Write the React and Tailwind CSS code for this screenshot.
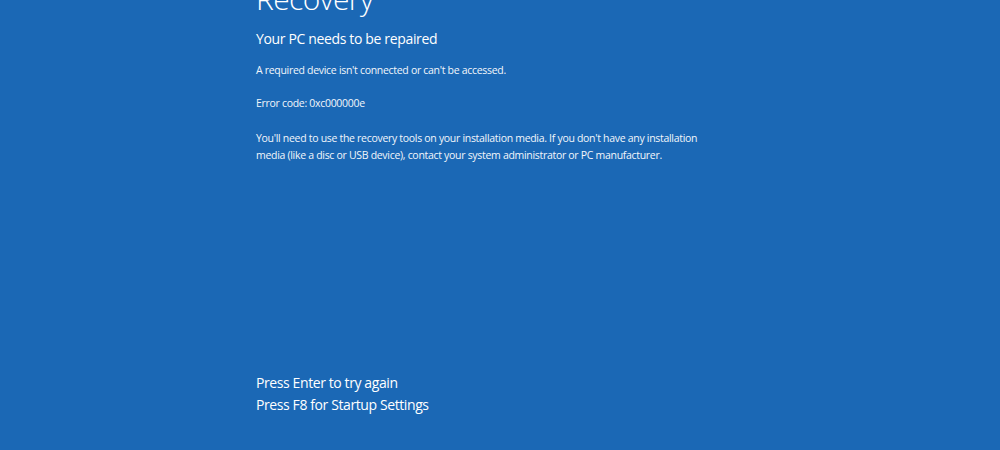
export default function App() {
  return (
    <div
      className="w-[1000px] h-[450px] overflow-hidden bg-[#1b68b5] text-white flex flex-col pl-[256px]"
      style={{ fontFamily: '"Open Sans", "Noto Sans", sans-serif' }}
    >
      <h1 className="text-[30px] font-light leading-[36px] mt-[-19px] tracking-[-0.6px]">Recovery</h1>
      <h2 className="text-[14px] leading-[20px] mt-[12px] tracking-[-0.35px]">Your PC needs to be repaired</h2>
      <div className="text-[10.5px] leading-[17px] tracking-[-0.3px] mt-[13px] text-[#f2f6fb]">
        <p>A required device isn't connected or can't be accessed.</p>
        <p className="mt-[16px]">Error code: 0xc000000e</p>
        <p className="mt-[18px] w-[450px]">
          You'll need to use the recovery tools on your installation media. If you don't have any installation media (like a disc or USB device), contact your system administrator or PC manufacturer.
        </p>
      </div>
      <div className="mt-auto mb-[34px] text-[14px] leading-[22px] tracking-[-0.4px]">
        <p>Press Enter to try again</p>
        <p>Press F8 for Startup Settings</p>
      </div>
    </div>
  )
}
